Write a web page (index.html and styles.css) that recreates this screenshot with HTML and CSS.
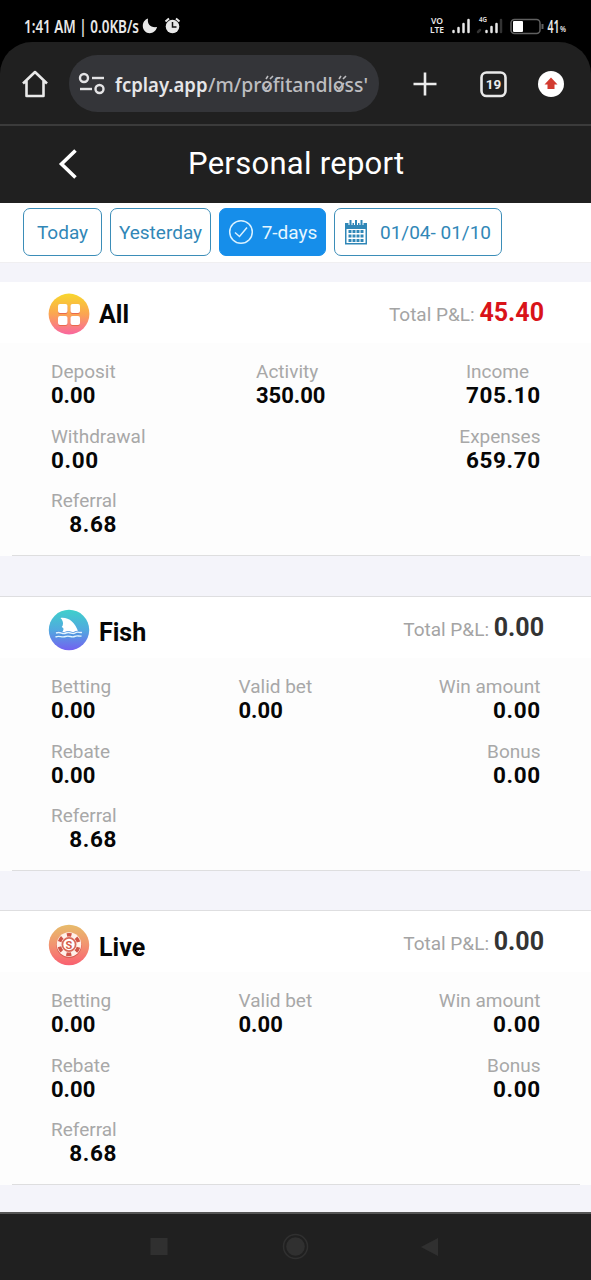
FILE: index.html
```html
<!DOCTYPE html>
<html lang="en">
<head>
<meta charset="utf-8">
<title>Personal report</title>
<link rel="stylesheet" href="styles.css">
</head>
<body>
<div class="phone">
  <div class="status">
    <svg width="591" height="42" viewBox="0 0 591 42">
      <g class="status-text">
        <text x="24" y="33" font-size="18" textLength="115" lengthAdjust="spacingAndGlyphs">1:41 AM | 0.0KB/s</text>
        <text x="431" y="24" font-size="8.500" textLength="12" lengthAdjust="spacingAndGlyphs">VO</text>
        <text x="430" y="33" font-size="8.500" textLength="14" lengthAdjust="spacingAndGlyphs">LTE</text>
        <text x="479" y="22" font-size="7.500" textLength="8" lengthAdjust="spacingAndGlyphs">4G</text>
        <text x="547.500" y="32.500" font-size="17" textLength="12" lengthAdjust="spacingAndGlyphs">41</text>
        <text x="560" y="32" font-size="9" textLength="6" lengthAdjust="spacingAndGlyphs">%</text>
      </g>
      <path fill="#e8e8e8" d="M148 18.500c-1 5.500 2.500 9.500 9 8.500-1 4-4 6.200-7.200 6.200-4 0-7-3.200-7-7.200 0-3.500 2-6.500 5.200-7.500z"/>
      <circle cx="172.500" cy="26.500" r="6.800" fill="#e8e8e8"/>
      <path d="M165.500 21.500l3.500-2.900M179.500 21.500l-3.500-2.900" stroke="#e8e8e8" stroke-width="2"/>
      <path d="M172.500 22v5h4" fill="none" stroke="#111" stroke-width="1.500"/>
      <g stroke="#e8e8e8" stroke-width="2.500" stroke-linecap="round">
        <path d="M453.500 31v1M458.500 28v4M463.500 24v8M468.500 20v12"/>
        <path d="M486.500 31v1M491.500 27v5M496.500 24v8"/>
        <path d="M501 20v12" stroke="#333"/>
        <path d="M478 32l2-2" stroke="#333"/>
      </g>
      <rect x="511" y="19.500" width="29" height="14" rx="3.500" fill="none" stroke="#606060" stroke-width="1.500"/>
      <path d="M542.500 24v5" stroke="#606060" stroke-width="2"/>
      <rect x="513" y="21" width="10" height="11" rx="1" fill="#fff"/>
    </svg>
  </div>
  <div class="browser">
    <svg class="home" width="28" height="30" viewBox="0 0 28 30"><path d="M2 15.500L14 4l12 11.500M5.500 13v15h17V13" fill="none" stroke="#e9e9e9" stroke-width="2.600" stroke-linejoin="round"/></svg>
    <div class="address">
      <svg width="310" height="57" viewBox="0 0 310 57">
        <g fill="none" stroke="#e3e3e5" stroke-width="2.400">
          <circle cx="15" cy="23" r="4"/><path d="M23 23h12"/>
          <path d="M11 34h12"/><circle cx="30.500" cy="34" r="4"/>
        </g>
        <text class="domain" x="46" y="37" textLength="92.500" lengthAdjust="spacingAndGlyphs">fcplay.app</text>
        <text class="path" x="139" y="37" textLength="160" lengthAdjust="spacingAndGlyphs">/m/profitandloss'</text>
        <g fill="none" stroke="#bdbdc0" stroke-width="1.600">
          <path d="M194 31l3 3 5-6M197 24l2-3M201 24l3-3M267 31l3 3 5-6M270 24l2-3M274 24l3-3"/>
        </g>
      </svg>
    </div>
    <svg class="tools" width="166" height="40" viewBox="0 0 166 40">
      <path d="M11.500 21h23M23 9.500v23" stroke="#ececec" stroke-width="2.600"/>
      <rect x="79.500" y="9.500" width="24" height="23.500" rx="5" fill="none" stroke="#e9e9e9" stroke-width="2.600"/>
      <text class="count" x="91.500" y="26" text-anchor="middle">19</text>
      <circle cx="149" cy="21" r="13" fill="#fff"/>
      <path d="M149 14.500l6.500 7h-3v4.500h-7v-4.500h-3z" fill="#d23b30"/>
    </svg>
  </div>
  <header class="titlebar">
    <svg width="22" height="32" viewBox="0 0 22 32"><path d="M18.500 2.500L4.500 16l14 13.500" fill="none" stroke="#fff" stroke-width="3.600"/></svg>
    <h1>Personal report</h1>
  </header>
  <nav class="filters">
    <button class="filter today">Today</button>
    <button class="filter yesterday">Yesterday</button>
    <button class="filter week"><svg width="26" height="26" viewBox="0 0 26 26"><g fill="none" stroke="#d9f1ff" stroke-width="1.500"><circle cx="13" cy="13" r="11.300"/><path d="M7 13.500l4.500 4L19 8.500"/></g></svg><span>7-days</span></button>
    <button class="filter range"><svg width="22" height="25" viewBox="0 0 22 25"><path fill="#3087b7" d="M0 3h22v21.500H0z"/><path fill="#fff" d="M1.500 9h19v14h-19z"/><path d="M5.500 0v5M11 0v5M16.500 0v5" stroke="#fff" stroke-width="4"/><path d="M5.500 0v5M11 0v5M16.500 0v5" stroke="#3087b7" stroke-width="2"/><path d="M3.500 11.500h15M3.500 16h15M3.500 20.500h15" stroke="#3087b7" stroke-width="3" stroke-dasharray="3 1"/></svg><span>01/04- 01/10</span></button>
  </nav>
  <main>
    <section class="card all">
      <div class="head">
        <svg class="badge" width="42" height="42" viewBox="0 0 42 42"><defs><linearGradient id="gAll" x2="0" y2="1"><stop stop-color="#f8d72d"/><stop offset=".5" stop-color="#fba552"/><stop offset="1" stop-color="#f9669f"/></linearGradient></defs><circle cx="21" cy="21" r="20.400" fill="url(#gAll)"/><g fill="#e9694e"><rect x="10" y="12" width="9.500" height="9" rx="2"/><rect x="22.500" y="12" width="9.500" height="9" rx="2"/><rect x="10" y="24" width="9.500" height="9" rx="2"/><rect x="22.500" y="24" width="9.500" height="9" rx="2"/></g><g fill="#fff"><rect x="10" y="11" width="9.500" height="9" rx="2"/><rect x="22.500" y="11" width="9.500" height="9" rx="2"/><rect x="10" y="23" width="9.500" height="9" rx="2"/><rect x="22.500" y="23" width="9.500" height="9" rx="2"/></g></svg>
        <h2>All</h2>
        <p class="total">Total P&amp;L: <b class="red">45.40</b></p>
      </div>
      <div class="stats">
        <div class="stat"><span>Deposit</span><b>0.00</b></div>
        <div class="stat"><span>Activity</span><b>350.00</b></div>
        <div class="stat last"><span>Income</span><b class="wide">705.10</b></div>
        <div class="stat"><span>Withdrawal</span><b class="wide">0.00</b></div>
        <div></div>
        <div class="stat last end"><span>Expenses</span><b class="wide">659.70</b></div>
        <div class="stat end first"><span>Referral</span><b class="wide">8.68</b></div>
      </div>
    </section>
    <section class="card fish">
      <div class="head">
        <svg class="badge" width="42" height="42" viewBox="0 0 42 42"><defs><linearGradient id="gFish" x2="0" y2="1"><stop stop-color="#3fd0cb"/><stop offset=".5" stop-color="#51a9df"/><stop offset="1" stop-color="#7361f0"/></linearGradient></defs><circle cx="21" cy="21" r="20.200" fill="url(#gFish)"/><path d="M12.500 9c8-1 14.500 4 18 14.500H14c1.500-2 1.800-3.300 1.200-4.500l-1.500-1 1-1.500c1-3-.2-5.500-2.200-7.500z" fill="#fff"/><path d="M8 24c5-2 6 2 10 0s6 2 9 0 4 0 7-.5M7.500 28c4-2 6 1 10-.5s6 1.500 9 0 4 0 7-.5" fill="none" stroke="#5094df" stroke-width="3"/><path d="M8 24c5-2 6 2 10 0s6 2 9 0 4 0 7-.5M7.500 28c4-2 6 1 10-.5s6 1.500 9 0 4 0 7-.5" fill="none" stroke="#e3f4ff" stroke-width="1.400"/></svg>
        <h2>Fish</h2>
        <p class="total">Total P&amp;L: <b>0.00</b></p>
      </div>
      <div class="stats">
        <div class="stat"><span>Betting</span><b>0.00</b></div>
        <div class="stat"><span>Valid bet</span><b>0.00</b></div>
        <div class="stat last end"><span>Win amount</span><b class="wide">0.00</b></div>
        <div class="stat"><span>Rebate</span><b>0.00</b></div>
        <div></div>
        <div class="stat last end"><span>Bonus</span><b class="wide">0.00</b></div>
        <div class="stat end first"><span>Referral</span><b class="wide">8.68</b></div>
      </div>
    </section>
    <section class="card live">
      <div class="head">
        <svg class="badge" width="42" height="42" viewBox="0 0 42 42"><defs><linearGradient id="gLive" x2="0" y2="1"><stop stop-color="#e7bc6b"/><stop offset=".5" stop-color="#f29470"/><stop offset="1" stop-color="#f96070"/></linearGradient></defs><circle cx="21" cy="21" r="20.200" fill="url(#gLive)"/><circle cx="21" cy="21.500" r="12.500" fill="#d85a50"/><circle cx="21" cy="20.500" r="12.200" fill="#fff0e8"/><circle cx="21" cy="20.500" r="9.800" fill="none" stroke="#cf5548" stroke-width="3.600" stroke-dasharray="5 5.260" stroke-dashoffset="2.500" transform="rotate(-90 21 20.500)"/><circle cx="21" cy="20.500" r="6.600" fill="#fff" stroke="#d96a5a" stroke-width="1.800"/><text class="chip" x="21" y="24.500" text-anchor="middle">S</text></svg>
        <h2>Live</h2>
        <p class="total">Total P&amp;L: <b>0.00</b></p>
      </div>
      <div class="stats">
        <div class="stat"><span>Betting</span><b>0.00</b></div>
        <div class="stat"><span>Valid bet</span><b>0.00</b></div>
        <div class="stat last end"><span>Win amount</span><b class="wide">0.00</b></div>
        <div class="stat"><span>Rebate</span><b>0.00</b></div>
        <div></div>
        <div class="stat last end"><span>Bonus</span><b class="wide">0.00</b></div>
        <div class="stat end first"><span>Referral</span><b class="wide">8.68</b></div>
      </div>
    </section>
  </main>
  <footer class="navkeys">
    <svg width="591" height="66" viewBox="0 0 591 66"><rect x="150.500" y="24" width="17" height="17" fill="#303030"/><circle cx="295.500" cy="32.500" r="12" fill="none" stroke="#303030" stroke-width="1.500"/><circle cx="295.500" cy="32.500" r="9.300" fill="#303030"/><path d="M421 33l17-9v18z" fill="#303030"/></svg>
  </footer>
</div>
</body>
</html>
```

FILE: styles.css
```css
* { box-sizing: border-box; margin: 0; padding: 0; }
body { background: #000; font-family: Roboto, "Liberation Sans", sans-serif; }
svg { display: block; flex: none; }
.phone { width: 591px; height: 1280px; display: flex; flex-direction: column; overflow: hidden; }
.status { height: 42px; background: #000; }
.status-text { fill: #e8e8e8; font-family: "Noto Sans", sans-serif; font-weight: 600; }
.browser { height: 84px; display: flex; align-items: center; background: #202020; border-bottom: 2px solid #3b3b3b; border-radius: 32px 32px 0 0; padding-left: 21px; }
.address { width: 310px; height: 57px; margin-left: 20px; border-radius: 29px; background: #343539; }
.domain { fill: #e6e6e8; font: 600 20.5px "Noto Sans", sans-serif; }
.path { fill: #bdbdc0; font: 500 20.5px "Noto Sans", sans-serif; }
.tools { margin-left: 23px; }
.count { fill: #ededed; font-size: 13.5px; font-weight: 700; }
.titlebar { height: 77px; background: #202020; display: flex; align-items: center; padding: 0 0 2px 57px; color: #fff; }
.titlebar h1 { margin-left: 109px; font-size: 31px; font-weight: 400; letter-spacing: .28px; white-space: nowrap; }
.filters { height: 60px; background: #fff; display: flex; gap: 8px; padding: 5px 0 0 23px; border-bottom: 1px solid #f0eff1; }
.filter { height: 48px; border: 1px solid #3b8db8; border-radius: 7px; background: #fff; color: #3187b7; font: 400 19px Roboto, sans-serif; display: flex; align-items: center; justify-content: center; white-space: nowrap; }
.today { width: 79px; }
.yesterday { width: 101px; }
.week { width: 107px; background: #168eea; border-color: #168eea; color: #e5f6ff; gap: 8px; }
.range { width: 168px; gap: 13px; }
main { height: 949px; background: #f4f4fa; padding-top: 19px; }
.card { height: 274px; background: #fdfdfd; margin-bottom: 40px; display: flex; flex-direction: column; }
.card::after { content: ""; height: 1px; flex: none; margin: auto 11px 0 12px; background: #dededf; }
.fish, .live { height: 275px; border-top: 1px solid #dedee0; }
.fish { margin-bottom: 39px; }
.head { height: 61px; flex: none; background: #fff; display: flex; align-items: flex-start; padding: 11px 47px 0 48px; }
.head h2 { margin: 7px 0 0 9px; font-size: 25px; line-height: 30px; font-weight: 700; color: #060606; }
.total { margin: 5px 0 0 auto; color: #a4a4a4; font-size: 19px; line-height: 30px; white-space: nowrap; height: 30px; }
.total b { font-size: 25px; color: #333; font-weight: 700; }
.total .red { color: #d91319; }
.fish .badge { margin-top: 1px; }
.live .badge { margin-top: 2px; }
.fish .head h2 { margin-top: 10px; }
.live .head h2 { margin-top: 11px; }
.stats { display: grid; grid-template-columns: 187.5px 1fr auto; grid-auto-rows: 64.5px; height: 211px; padding: 16px 50.5px 0 51px; }
.all .stats { grid-template-columns: 205px 1fr auto; }
.stat { display: flex; flex-direction: column; align-items: flex-start; justify-self: start; }
.last { justify-self: end; }
.end { align-items: flex-end; }
.stat span { height: 24px; color: #a8a8a8; font-size: 19px; line-height: 25px; white-space: nowrap; }
.stat b { color: #060606; font-size: 22px; line-height: 25px; font-weight: 700; }
.stat .wide { font-size: 22.5px; letter-spacing: .65px; margin-right: -.4px; }
.navkeys { height: 68px; background: #202020; border-top: 2px solid #555; }
.chip { font: 700 11px Roboto, sans-serif; fill: #d65e48; }
```
